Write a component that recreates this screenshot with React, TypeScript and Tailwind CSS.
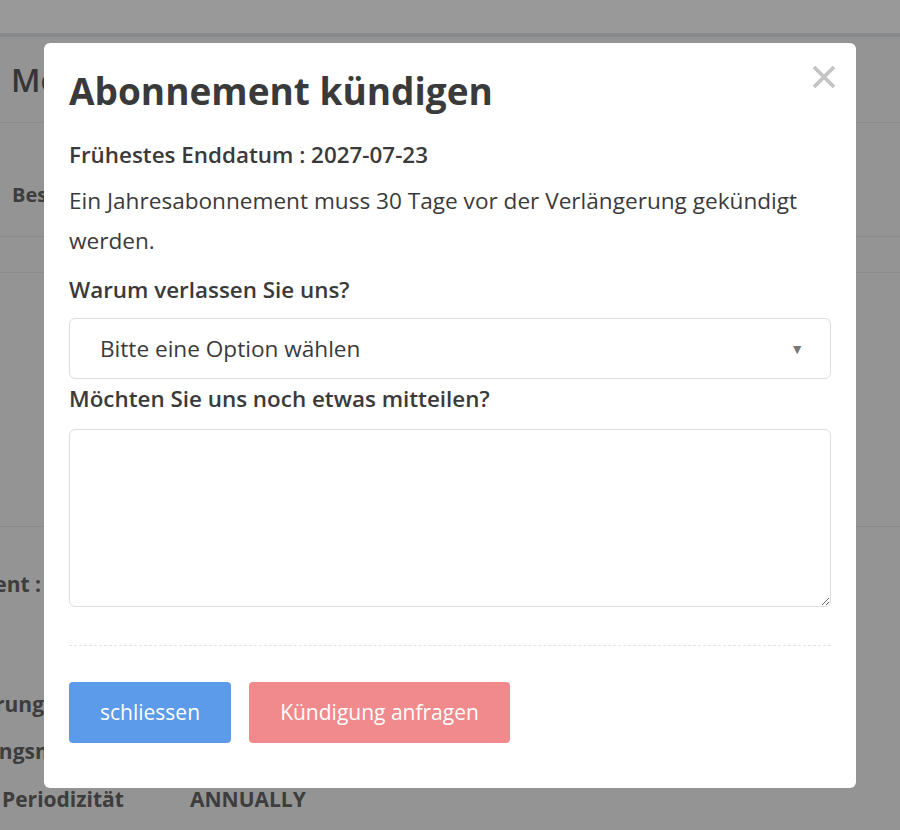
import React from "react";

const font = { fontFamily: "'Open Sans', 'Noto Sans', 'Liberation Sans', sans-serif" };

function Background() {
  return (
    <div className="relative w-[900px] h-[830px] overflow-hidden bg-[#f7f7f7] text-[#666666]" style={font}>
      <div className="h-[37px] bg-white border-b-4 border-[#e2e6ea]" />
      <div className="h-[86px] flex items-center pl-[11px] border-b border-[#e6e6e6]">
        <span className="text-[32px] font-semibold text-[#5a5a5a]">Meine Abonnements</span>
      </div>
      <div className="h-[114px] pt-[57px] pl-[12px] border-b border-[#e6e6e6]">
        <span className="text-[20px] font-bold leading-[30px]">Bestellung</span>
      </div>
      <div className="h-[36px] border-b border-[#e6e6e6]" />
      <div className="h-[254px] border-b border-[#e6e6e6]" />
      <div className="pt-[42px] whitespace-nowrap text-[21px] font-bold leading-[30px]">
        <div className="h-[30px] flex justify-end w-[241px] ml-[-200px]">Abonnement :</div>
        <div className="h-[90px]" />
        <div className="h-[30px] flex justify-end w-[244px] ml-[-200px]">Verlängerung</div>
        <div className="h-[17px]" />
        <div className="h-[30px] ml-[-60px]">Zahlungsmethode</div>
        <div className="h-[18px]" />
        <div className="flex h-[30px] ml-[2px]">
          <span className="w-[188px]">Periodizität</span>
          <span>ANNUALLY</span>
        </div>
      </div>
    </div>
  );
}

export default function App() {
  return (
    <div className="relative w-[900px] h-[830px] overflow-hidden">
      <Background />
      <div className="absolute inset-0 bg-black/40" />
      <div
        className="absolute left-[44px] top-[43px] w-[812px] h-[745px] rounded-[6px] bg-white px-[25px] pt-[24px] text-[#3a3a3a]"
        style={font}
      >
        <svg
          className="absolute right-[20px] top-[22px]"
          width="24"
          height="24"
          viewBox="0 0 24 24"
        >
          <path d="M2 2 L22 22 M22 2 L2 22" stroke="#c4c4c4" strokeWidth="3.8" strokeLinecap="butt" />
        </svg>
        <h1 className="h-[48px] text-[37px] leading-[48px] font-bold text-[#3a3a3a]">Abonnement kündigen</h1>
        <div className="mt-[25px] h-[30px] text-[22.4px] leading-[30px] font-semibold">Frühestes Enddatum : 2027-07-23</div>
        <p className="mt-[11px] text-[22.6px] leading-[40px]">
          Ein Jahresabonnement muss 30 Tage vor der Verlängerung gekündigt
          <br />
          werden.
        </p>
        <div className="mt-[14px] h-[30px] text-[22.4px] leading-[30px] font-semibold">Warum verlassen Sie uns?</div>
        <div className="relative mt-[13px] h-[61px] rounded-[6px] border border-[#dcdfe2] flex items-center pl-[30px] text-[22.6px]">
          <span>Bitte eine Option wählen</span>
          <span className="absolute right-[26px] top-[19px] text-[14px] text-[#777777]">▼</span>
        </div>
        <div className="mt-[5px] h-[30px] text-[22.4px] leading-[30px] font-semibold">Möchten Sie uns noch etwas mitteilen?</div>
        <textarea
          className="mt-[15px] block w-[762px] h-[178px] rounded-[6px] border border-[#dcdfe2] outline-none resize"
          style={font}
        />
        <div className="mt-[38px] border-t border-dashed border-[#e4e4e4]" />
        <div className="mt-[36px] flex gap-[18px]">
          <button className="w-[162px] h-[61px] rounded-[4px] bg-[#5b9be9] text-white text-[21px]">schliessen</button>
          <button className="w-[261px] h-[61px] rounded-[4px] bg-[#f18a8c] text-white text-[21px]">Kündigung anfragen</button>
        </div>
      </div>
    </div>
  );
}
